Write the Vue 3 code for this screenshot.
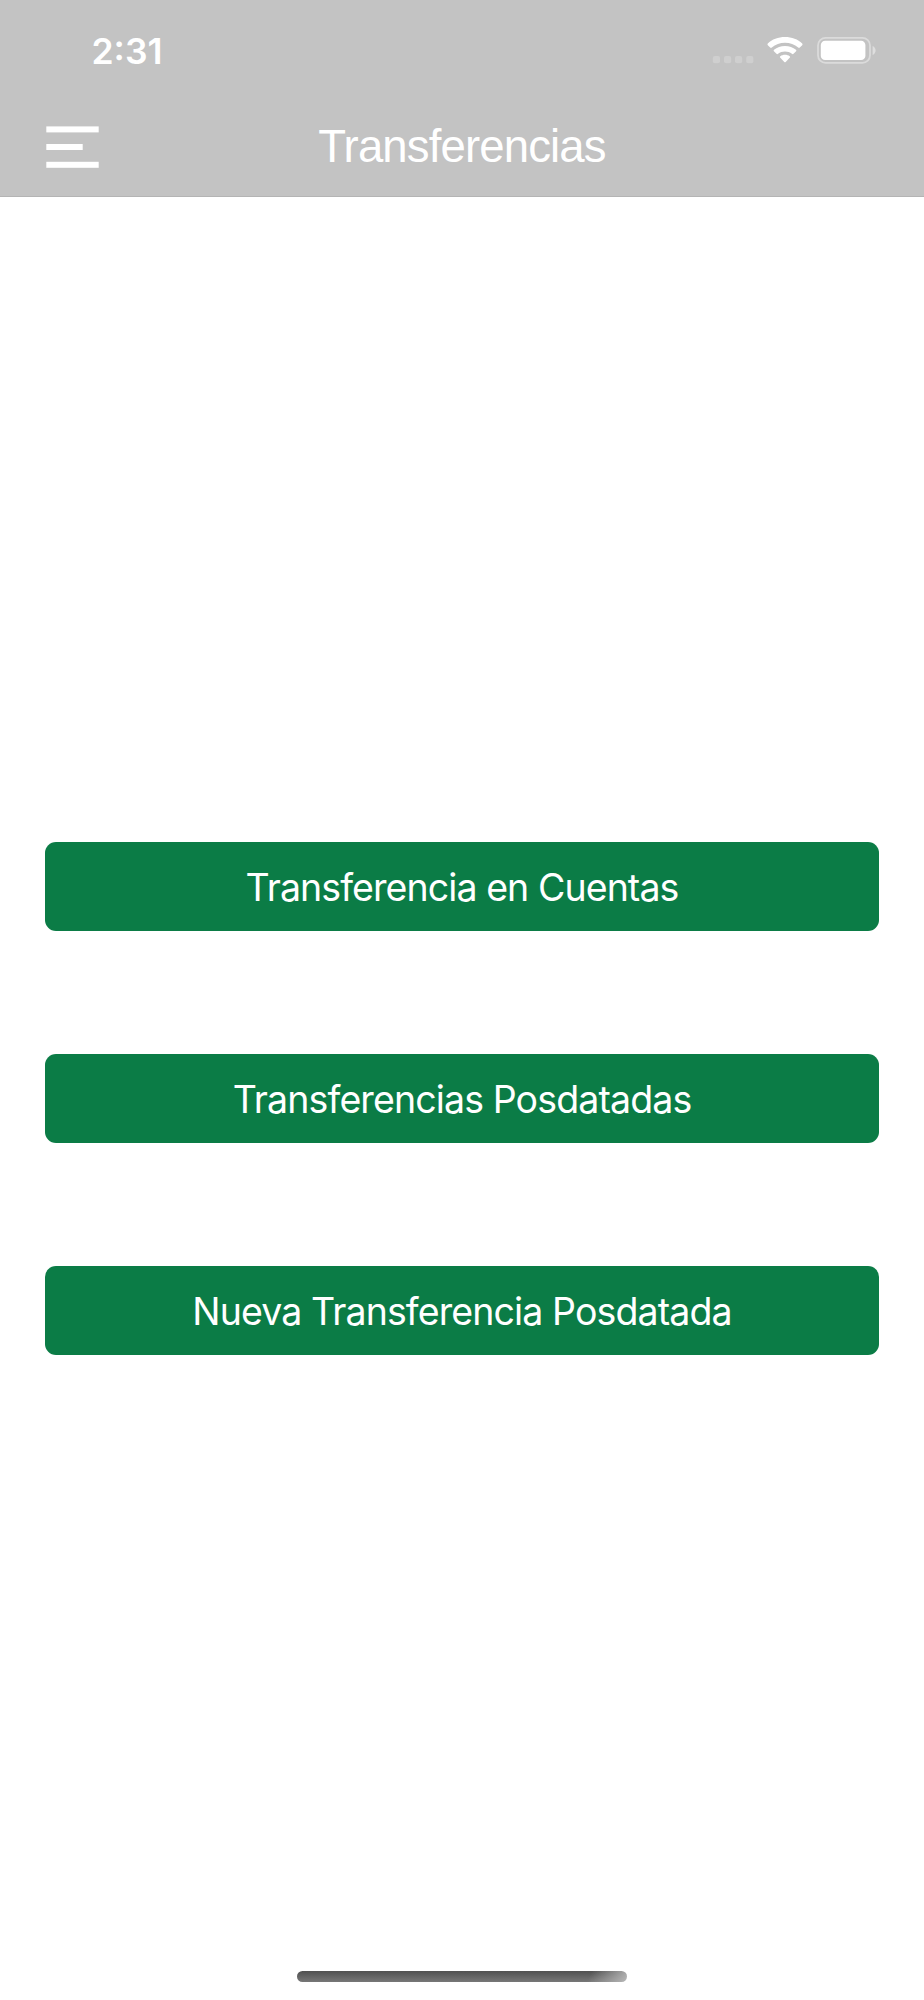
<script setup>
const actions = [
  { label: 'Transferencia en Cuentas', cls: 'accounts' },
  { label: 'Transferencias Posdatadas', cls: 'postdated' },
  { label: 'Nueva Transferencia Posdatada', cls: 'new-postdated' },
]
</script>

<template>
  <div class="screen">
    <header class="header">
      <div class="status">
        <span class="time">2:31</span>
        <svg class="indicators" width="168" height="32" viewBox="0 0 168 32" aria-hidden="true">
          <g fill="#fff" fill-opacity=".2">
            <rect x="0.8" y="20" width="7.2" height="7.2" rx="2" />
            <rect x="12" y="20" width="7.2" height="7.2" rx="2" />
            <rect x="23" y="20" width="7.2" height="7.2" rx="2" />
            <rect x="34.2" y="20" width="7.2" height="7.2" rx="2" />
          </g>
          <g fill="#fff">
            <path d="M55.8 9.2 Q55 8.3 55.8 7.5 C60 3.3 66.2 1 73 1 S86 3.3 90.2 7.5 Q91 8.3 90.2 9.2 L87.8 11.6 Q87 12.3 86.2 11.6 C82.6 8.5 78 6.7 73 6.7 S63.4 8.5 59.8 11.6 Q59 12.3 58.2 11.6 Z" />
            <path d="M61.9 15.3 Q61.2 14.5 62 13.8 C65 11.3 68.8 9.9 73 9.9 S81 11.3 84 13.8 Q84.8 14.5 84.1 15.3 L81.5 17.8 Q80.7 18.5 79.9 17.8 C78 16.3 75.6 15.5 73 15.5 S68 16.3 66.1 17.8 Q65.3 18.5 64.5 17.8 Z" />
            <path d="M68.1 21.6 Q67.4 20.8 68.3 20.2 C69.6 19.2 71.2 18.7 73 18.7 S76.4 19.2 77.7 20.2 Q78.6 20.8 77.9 21.6 L73.7 26 Q73 26.7 72.3 26 Z" />
          </g>
          <rect x="106" y="1.9" width="52" height="25" rx="7.6" fill="none" stroke="#fff" stroke-opacity=".4" stroke-width="1.8" />
          <rect x="108.8" y="4.8" width="44.6" height="19.3" rx="4.3" fill="#fff" />
          <path d="M160.6 10 C164.6 11.8 164.6 17.2 160.6 19 Z" fill="#fff" fill-opacity=".45" />
        </svg>
      </div>
      <nav class="bar">
        <button class="menu" aria-label="Menú">
          <svg width="54" height="42" viewBox="0 0 54 42">
            <g fill="#fff">
              <rect x=".3" y=".4" width="52.4" height="6" />
              <rect x=".3" y="18" width="36.4" height="6" />
              <rect x=".3" y="35.8" width="52.4" height="6" />
            </g>
          </svg>
        </button>
        <h1 class="title">Transferencias</h1>
      </nav>
    </header>
    <main class="actions">
      <button v-for="a in actions" :key="a.label" class="action">
        <span :class="a.cls">{{ a.label }}</span>
      </button>
    </main>
    <footer class="footer"><div class="home"></div></footer>
  </div>
</template>

<style>
html, body { background: #fff; }
body { margin: 0; }
</style>

<style scoped>
.screen {
  width: 924px;
  height: 2000px;
  display: flex;
  flex-direction: column;
  background: #fff;
  overflow: hidden;
}
button {
  border: 0;
  padding: 0;
  margin: 0;
  color: #fff;
}
.header {
  box-sizing: border-box;
  height: 197px;
  flex: none;
  background: #c3c3c3;
  border-bottom: 1px solid #b4b4b4;
  color: #fff;
}
.status {
  box-sizing: border-box;
  height: 101px;
  padding: 2px 44px 0 91.5px;
  display: flex;
  align-items: center;
  justify-content: space-between;
}
.time {
  font: 600 35.5px/40px Inter, sans-serif;
}
.indicators { display: block; }
.bar {
  display: grid;
  grid-template-columns: 54px 1fr 54px;
  padding: 0 46px;
  height: 92px;
  align-items: center;
}
.menu { background: none; height: 42px; }
.menu svg { display: block; }
.title {
  margin: 0;
  text-align: center;
  font: 400 45.5px/54px "Liberation Sans", Arial, sans-serif;
  letter-spacing: -0.85px;
}
.actions {
  margin-top: 645px;
  padding: 0 44.8px;
  display: flex;
  flex-direction: column;
  gap: 123px;
}
.action {
  box-sizing: border-box;
  height: 89px;
  padding-top: 2px;
  border-radius: 11px;
  background: #0b7c46;
  font: 400 37.5px/46px Inter, sans-serif;
  text-align: center;
}
.accounts { letter-spacing: -0.92px; }
.postdated { letter-spacing: -0.88px; }
.new-postdated { letter-spacing: -0.89px; }
.footer {
  margin-top: auto;
  height: 29px;
  display: flex;
  justify-content: center;
  align-items: flex-start;
}
.home {
  width: 330px;
  height: 11px;
  border-radius: 5.5px;
  background:
    linear-gradient(115deg, transparent 88%, rgba(190, 190, 190, .9) 100%),
    linear-gradient(#505050, #777);
}
</style>
